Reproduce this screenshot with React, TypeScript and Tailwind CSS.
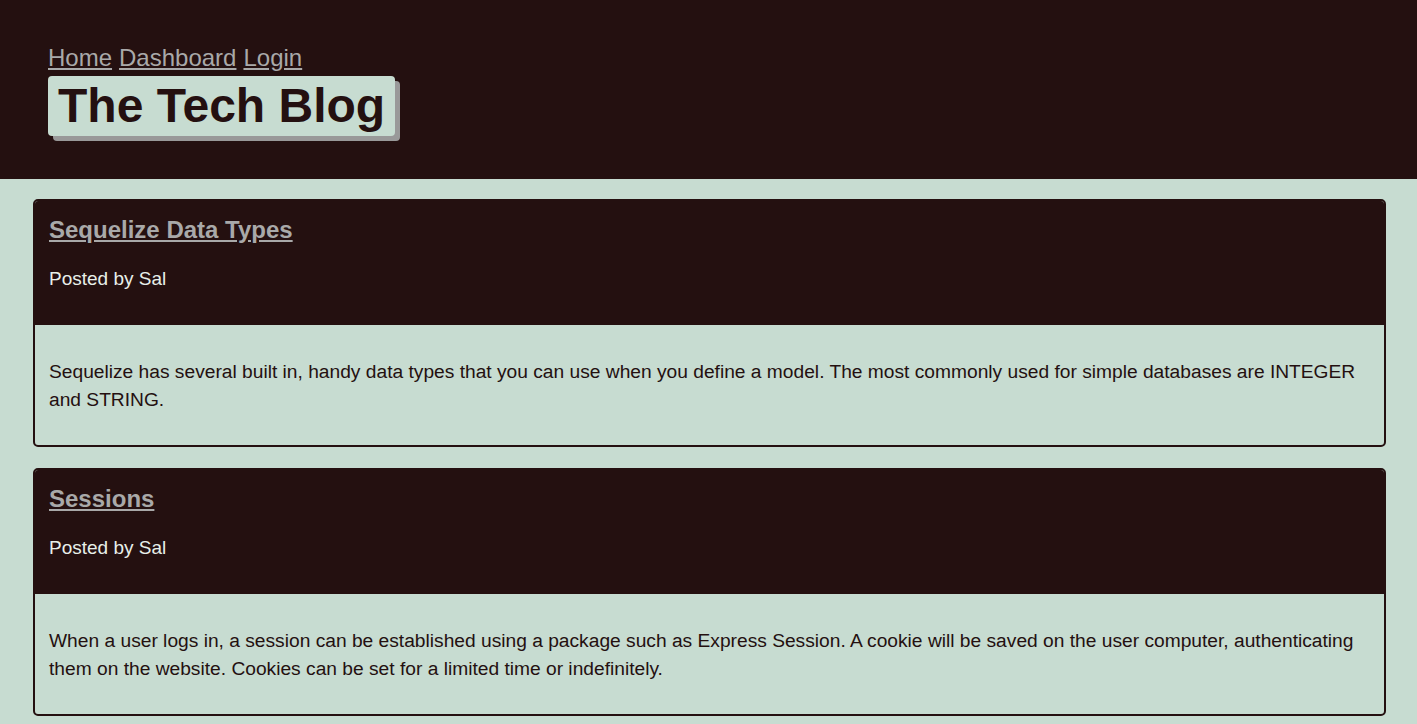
const posts = [
  {
    title: 'Sequelize Data Types',
    author: 'Sal',
    body: 'Sequelize has several built in, handy data types that you can use when you define a model. The most commonly used for simple databases are INTEGER and STRING.',
  },
  {
    title: 'Sessions',
    author: 'Sal',
    body: 'When a user logs in, a session can be established using a package such as Express Session. A cookie will be saved on the user computer, authenticating them on the website. Cookies can be set for a limited time or indefinitely.',
  },
];

function PostCard({ post }: { post: (typeof posts)[number] }) {
  return (
    <article className="rounded-[5px] border-2 border-[#241010] overflow-hidden">
      <div className="bg-[#241010] px-[14px] pt-[15px] h-[124px]">
        <a href="#" className="text-[24px] leading-[28px] font-bold text-[#a9a9a9] underline">
          {post.title}
        </a>
        <p className="mt-[23px] text-[19px] leading-[22px] text-[#e8efe9]">Posted by {post.author}</p>
      </div>
      <div className="px-[14px] pt-[33px] pb-[28px] h-[120px]">
        <p className="text-[19.2px] leading-[28px] text-[#241010]">{post.body}</p>
      </div>
    </article>
  );
}

export default function App() {
  return (
    <div className="min-h-screen bg-[#c7dcd1] font-['Liberation_Sans',Arial,sans-serif]">
      <header className="bg-[#241010] h-[179px] px-[48px] pt-[44px]">
        <nav className="flex gap-[7px] text-[24px] leading-[28px] text-[#a9a9a9]">
          <a href="#" className="underline">Home</a>
          <a href="#" className="underline">Dashboard</a>
          <a href="#" className="underline">Login</a>
        </nav>
        <h1 className="mt-[4px] inline-block bg-[#c7dcd1] rounded-[4px] px-[10px] h-[60px] text-[48px] leading-[60px] font-bold text-[#241010] shadow-[5px_5px_0_#999999]">
          The Tech Blog
        </h1>
      </header>
      <main className="px-[33px] pt-[20px] pb-[20px] flex flex-col gap-[21px] mr-[-2px]">
        {posts.map((p) => (
          <PostCard key={p.title} post={p} />
        ))}
      </main>
    </div>
  );
}
